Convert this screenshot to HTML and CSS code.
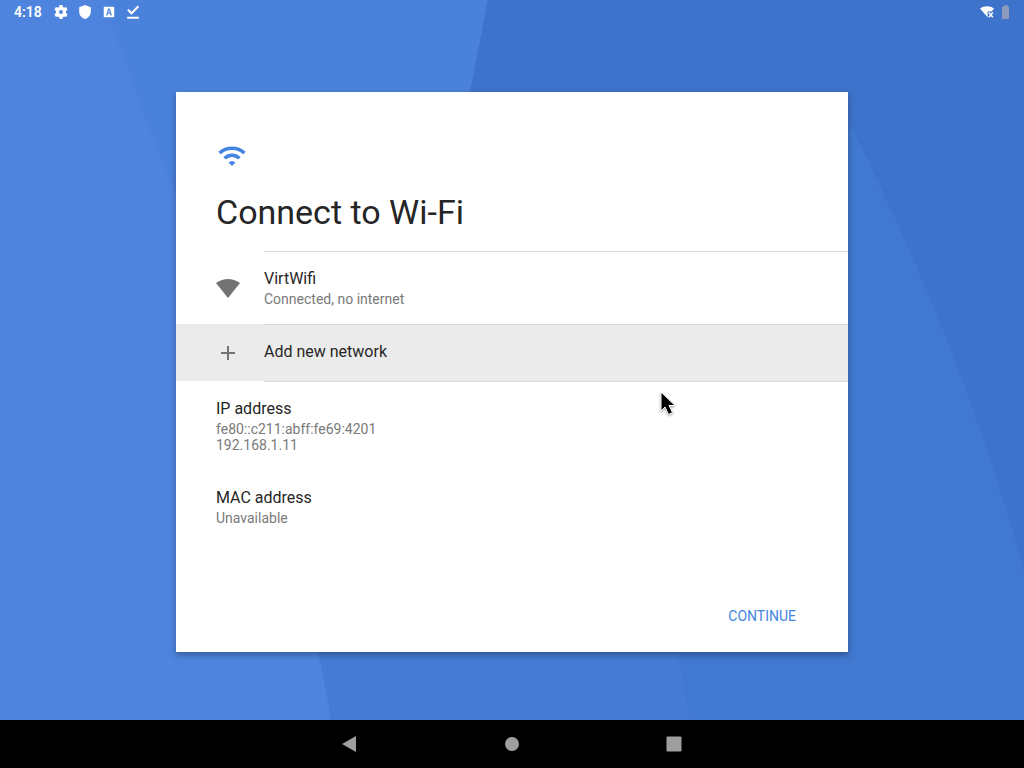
FILE: index.html
```html
<!DOCTYPE html>
<html lang="en">
  <head>
    <meta charset="UTF-8" />
    <meta name="viewport" content="width=device-width, initial-scale=1.0" />
    <title>Connect to Wi-Fi</title>
    <link rel="stylesheet" href="styles.css">
  </head>
  <body>
    <svg class="wallpaper" viewBox="0 0 1024 720" preserveAspectRatio="none" aria-hidden="true">
      <rect width="1024" height="720" fill="#4178d0" />
      <path d="M0 0H488L470 92L400 652H0Z" fill="#4a81da" />
      <path d="M488 0H1024V570Q960 340 850 125L700 300L470 92Z" fill="#3d73cb" />
      <path d="M300 600H668L690 720H300Z" fill="#457bd4" />
      <path d="M0 0H105Q125 70 176 195Q290 480 331 720H0Z" fill="#4e84de" />
    </svg>

    <header class="status-bar">
      <div class="status-group">
        <time class="clock">4:18</time>
        <svg class="status-icon" viewBox="0 0 24 24">
          <path fill-rule="evenodd" d="M9.500 0h5l.5 3.200 2.200 1.300 3.500-1.200 2.500 4.300-2.500 2.500v3.800l2.500 2.500-2.500 4.300-3.500-1.200-2.200 1.300-.5 3.200h-5L9 20.800l-2.200-1.300-3.500 1.200-2.500-4.300 2.500-2.500v-3.800L.8 7.600l2.500-4.300 3.500 1.200L9 3.200zM12 8.700a3.300 3.300 0 1 0 0 6.600 3.300 3.300 0 0 0 0-6.600z" />
        </svg>
        <svg class="status-icon" viewBox="0 0 24 24">
          <path d="M12 0 2 4V11c0 6 4 11 10 13C18 22 22 17 22 11V4z" />
        </svg>
        <svg class="status-icon" viewBox="0 0 24 24">
          <path fill-rule="evenodd" d="M4 3h16a1 1 0 0 1 1 1v17H3V4a1 1 0 0 1 1-1zM10.700 6 7 18h2.300l.8-2.800h3.800l.8 2.800H17L13.300 6zm1.300 2.500 1.300 4.700h-2.600z" />
        </svg>
        <svg class="status-icon" viewBox="0 0 24 24">
          <path d="M2 20h20v3.500H2zM2 9.500l2.600-2.600 4.900 4.600L20 .8l2.600 2.600L9.500 16.800z" />
        </svg>
      </div>
      <div class="status-group status-end">
        <svg class="status-icon" viewBox="0 0 24 24">
          <path d="M0 6C7 1 17 1 24 6l-4 5h-7v10z" />
          <path d="m15 13 7 8m0-8-7 8" stroke="#fff" stroke-width="2.500" />
        </svg>
        <svg class="battery" viewBox="0 0 8 14">
          <path d="M2.500 0h3v1.500H7V14H0V1.500h2.500z" />
        </svg>
      </div>
    </header>

    <main class="screen">
      <section class="card">
        <svg class="wifi-logo" viewBox="0 0 32 32" aria-hidden="true">
          <path d="M3.500 13C10.500 6.500 21.500 6.500 28.500 13M8.500 18.300C13 14.300 19 14.300 23.500 18.300" />
          <path class="wifi-dot" d="M12.500 22.500q3.500-3 7 0L16 26z" />
        </svg>
        <h1 class="title">Connect to Wi-Fi</h1>

        <ul class="networks">
          <li>
            <button class="network" type="button">
              <svg class="network-icon" viewBox="0 0 24 24" aria-hidden="true">
                <path d="M12 22 0 7Q12-1 24 7z" />
              </svg>
              <span class="network-text">
                <span class="label">VirtWifi</span>
                <span class="detail">Connected, no internet</span>
              </span>
            </button>
          </li>
          <li>
            <button class="network add" type="button">
              <svg class="network-icon" viewBox="0 0 24 24" aria-hidden="true">
                <path d="M11 5h2v6h6v2h-6v6h-2v-6H5v-2h6z" />
              </svg>
              <span class="network-text">
                <span class="label">Add new network</span>
              </span>
            </button>
          </li>
        </ul>

        <dl class="addresses">
          <div class="address">
            <dt class="label">IP address</dt>
            <dd class="detail">fe80::c211:abff:fe69:4201<br>192.168.1.11</dd>
          </div>
          <div class="address">
            <dt class="label">MAC address</dt>
            <dd class="detail">Unavailable</dd>
          </div>
        </dl>

        <div class="actions">
          <button class="continue" type="button">CONTINUE</button>
        </div>
      </section>
    </main>

    <nav class="nav-bar">
      <button class="nav-button" type="button" aria-label="Back">
        <svg viewBox="0 0 18 18"><path d="M1 9 15 1v16z" /></svg>
      </button>
      <button class="nav-button" type="button" aria-label="Home">
        <svg viewBox="0 0 18 18"><circle cx="9" cy="9" r="7" /></svg>
      </button>
      <button class="nav-button" type="button" aria-label="Overview">
        <svg viewBox="0 0 18 18"><rect x="1.500" y="1.500" width="15" height="15" rx="1" /></svg>
      </button>
    </nav>

    <svg class="pointer" viewBox="0 0 20 28" aria-hidden="true">
      <path d="M3 2v19l4-4 3.500 7.500 4-2L11 15.500h6z" />
    </svg>
  </body>
</html>
```
FILE: styles.css
```css
* {
  box-sizing: border-box;
}
body {
  margin: 0;
  min-height: 100vh;
  display: flex;
  flex-direction: column;
  font-family: Roboto, "Liberation Sans", sans-serif;
  color: #262626;
  background: #4178d0;
}
button {
  font: inherit;
  color: inherit;
  border: 0;
  padding: 0;
  background: none;
  cursor: pointer;
}
svg {
  display: block;
}

/* background sits behind everything, above the nav bar */
.wallpaper {
  position: absolute;
  top: 0;
  left: 0;
  z-index: -1;
  width: 100%;
  height: calc(100% - 48px);
}

/* status bar */
.status-bar {
  display: flex;
  justify-content: space-between;
  height: 24px;
  padding: 0 14px;
  color: #fff;
}
.status-group {
  display: flex;
  align-items: center;
  gap: 10px;
}
.status-end {
  gap: 8px;
}
.clock {
  font-size: 14px;
  font-weight: 600;
  line-height: 24px;
  margin-right: 2px;
}
.status-icon {
  width: 14px;
  height: 14px;
  fill: #fff;
}
.battery {
  width: 8px;
  height: 14px;
  fill: #8d9abb;
}

/* card */
.screen {
  flex: 1;
  display: flex;
  align-items: center;
  justify-content: center;
}
.card {
  display: flex;
  flex-direction: column;
  width: 100%;
  max-width: 672px;
  min-height: 560px;
  padding-top: 48px;
  background: #fff;
  box-shadow: 0 3px 6px rgba(0, 0, 0, 0.3);
}
.wifi-logo {
  width: 32px;
  height: 32px;
  margin-left: 40px;
  fill: none;
  stroke: #4285e0;
  stroke-width: 3.500;
}
.wifi-logo .wifi-dot {
  fill: #4285e0;
  stroke: none;
}
.title {
  margin: 17px 40px 16px;
  font-size: 34px;
  font-weight: 400;
  line-height: 46px;
}

/* network list */
.networks {
  list-style: none;
  margin: 0;
  padding: 0;
}
.network {
  display: flex;
  align-items: center;
  gap: 24px;
  width: 100%;
  min-height: 57px;
  padding-left: 40px;
  text-align: left;
  /* divider starts at the text, not at the icon */
  background: linear-gradient(#dadada, #dadada) 88px 0 / 100% 1px no-repeat;
}
.network-icon {
  width: 24px;
  height: 24px;
  fill: #737373;
}
.network-text {
  padding: 18px 0 17px;
}
.add {
  align-items: flex-start;
  background-color: #ebebeb;
}
.add .network-icon {
  margin-top: 17px;
}
.label,
.detail {
  display: block;
  margin: 0;
}
.label {
  font-size: 16px;
  line-height: 20px;
}
.detail {
  margin-top: 2px;
  font-size: 14px;
  line-height: 16px;
  color: #7a7a7a;
}

/* addresses */
.addresses {
  margin: 0;
  background: linear-gradient(#dadada, #dadada) 88px 0 / 100% 1px no-repeat;
}
.address {
  padding: 18px 40px 17px;
}
.actions {
  display: flex;
  justify-content: flex-end;
  margin-top: auto;
  padding: 0 36px 12px;
}
.continue {
  padding: 0 16px;
  font-size: 14px;
  line-height: 48px;
  color: #4285e0;
}

/* navigation bar */
.nav-bar {
  display: flex;
  justify-content: center;
  gap: 82px;
  height: 48px;
  background: #000;
}
.nav-button {
  display: flex;
  align-items: center;
  justify-content: center;
  width: 80px;
}
.nav-button svg {
  width: 18px;
  height: 18px;
  fill: #9e9e9e;
}

.pointer {
  position: absolute;
  top: 390px;
  left: 658px;
  width: 20px;
  height: 28px;
  fill: #000;
  stroke: #fff;
  stroke-width: 1;
  filter: drop-shadow(0 1px 1px rgba(0, 0, 0, 0.4));
  pointer-events: none;
}
```
